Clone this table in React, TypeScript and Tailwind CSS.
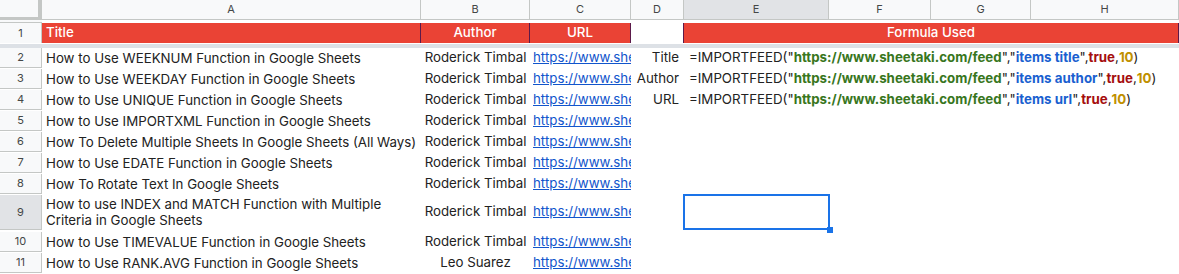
import React from 'react';

// column letters across the top of the sheet
const columns = [
  { label: 'A', selected: false },
  { label: 'B', selected: false },
  { label: 'C', selected: false },
  { label: 'D', selected: false },
  { label: 'E', selected: true },
  { label: 'F', selected: false },
  { label: 'G', selected: false },
  { label: 'H', selected: false },
];

interface Post {
  row: number;
  title: string[];
  author: string;
}

const posts: Post[] = [
  { row: 2, title: ['How to Use WEEKNUM Function in Google Sheets'], author: 'Roderick Timbal' },
  { row: 3, title: ['How to Use WEEKDAY Function in Google Sheets'], author: 'Roderick Timbal' },
  { row: 4, title: ['How to Use UNIQUE Function in Google Sheets'], author: 'Roderick Timbal' },
  { row: 5, title: ['How to Use IMPORTXML Function in Google Sheets'], author: 'Roderick Timbal' },
  { row: 6, title: ['How To Delete Multiple Sheets In Google Sheets (All Ways)'], author: 'Roderick Timbal' },
  { row: 7, title: ['How to Use EDATE Function in Google Sheets'], author: 'Roderick Timbal' },
  { row: 8, title: ['How To Rotate Text In Google Sheets'], author: 'Roderick Timbal' },
  {
    row: 9,
    title: ['How to use INDEX and MATCH Function with Multiple', 'Criteria in Google Sheets'],
    author: 'Roderick Timbal',
  },
  { row: 10, title: ['How to Use TIMEVALUE Function in Google Sheets'], author: 'Roderick Timbal' },
  { row: 11, title: ['How to Use RANK.AVG Function in Google Sheets'], author: 'Leo Suarez' },
];

const formulas: Record<number, { label: string; query: string }> = {
  2: { label: 'Title', query: 'items title' },
  3: { label: 'Author', query: 'items author' },
  4: { label: 'URL', query: 'items url' },
};

const gridCols = 'grid grid-cols-[42px_379px_109px_101px_53px_145px_102px_100px_1fr]';

function Formula({ query }: { query: string }) {
  return (
    <span className="whitespace-nowrap">
      =IMPORTFEED(&quot;
      <span className="font-bold text-[#38761d]">https://www.sheetaki.com/feed</span>
      &quot;,&quot;
      <span className="font-bold text-[#1a5fd0]">{query}</span>
      &quot;,
      <span className="font-bold text-[#a50e0e]">true</span>,
      <span className="font-bold text-[#bf9000]">10</span>)
    </span>
  );
}

export default function App() {
  return (
    <div
      className="h-[274px] w-[1179px] overflow-hidden bg-white text-[13.3px] text-[#222222]"
      style={{ fontFamily: 'Inter, "Noto Sans", sans-serif' }}
    >
      {/* column header row */}
      <div className={`${gridCols} h-[23px] text-[11px] text-[#444746]`}>
        <div className="border-b-[3px] border-r-[4px] border-[#c4c7c5] bg-[#f8f9fa]" />
        {columns.map(col => (
          <div
            key={col.label}
            className={`flex items-center justify-center border-b border-r border-[#c4c7c5] ${
              col.selected ? 'bg-[#e1e3e6]' : 'bg-[#f8f9fa]'
            }`}
          >
            {col.label}
          </div>
        ))}
        <div className="border-b border-[#c4c7c5] bg-[#f8f9fa]" />
      </div>

      {/* row 1: red header */}
      <div className={`${gridCols} h-[21px] font-medium text-white`}>
        <div className="flex items-center justify-center border-r border-[#c4c7c5] bg-[#f8f9fa] text-[11px] font-normal text-[#444746]">
          1
        </div>
        <div className="flex items-center border-r border-[#5b1a4a] bg-[#ea4335] pl-[4px]">Title</div>
        <div className="flex items-center justify-center border-r border-[#5b1a4a] bg-[#ea4335]">Author</div>
        <div className="flex items-center justify-center border-r border-[#5b1a4a] bg-[#ea4335]">URL</div>
        <div className="border-r border-[#5b1a4a] bg-white" />
        <div className="col-span-4 flex items-center justify-center border-r border-[#5b1a4a] bg-[#ea4335]">
          Formula Used
        </div>
        <div className="bg-white" />
      </div>

      {/* frozen divider */}
      <div className="h-[4px] bg-[#dde1e6]" />

      {posts.map(post => {
        const formula = formulas[post.row];
        const tall = post.title.length > 1;
        return (
          <div key={post.row} className={`${gridCols} ${tall ? 'h-[37px]' : 'h-[21px]'}`}>
            <div
              className={`flex items-center justify-center border-b border-r border-[#c4c7c5] text-[11px] text-[#444746] ${
                tall ? 'bg-[#e1e3e6]' : 'bg-[#f8f9fa]'
              }`}
            >
              {post.row}
            </div>
            <div className="flex flex-col justify-center overflow-hidden whitespace-nowrap pl-[4px] leading-[16px]">
              {post.title.map(line => (
                <span key={line}>{line}</span>
              ))}
            </div>
            <div className="flex items-center justify-center overflow-hidden whitespace-nowrap">
              {post.author}
            </div>
            <div className="flex items-center overflow-hidden whitespace-nowrap pl-[3px]">
              <span className="block w-full overflow-hidden text-[#1155cc] underline">
                https://www.sheetaki.com/
              </span>
            </div>
            <div className="flex items-center justify-end whitespace-nowrap pr-[5px]">{formula?.label}</div>
            {formula ? (
              <div className="col-span-4 flex items-center pl-[5px]">
                <Formula query={formula.query} />
              </div>
            ) : (
              <>
                <div className="relative">
                  {tall && (
                    <>
                      <div className="absolute inset-x-[-1px] top-[-1px] bottom-0 border-2 border-[#1a73e8]" />
                      <div className="absolute right-[-4px] bottom-[-3px] h-[6px] w-[6px] bg-[#1a73e8]" />
                    </>
                  )}
                </div>
                <div />
                <div />
                <div />
              </>
            )}
            <div />
          </div>
        );
      })}
    </div>
  );
}
